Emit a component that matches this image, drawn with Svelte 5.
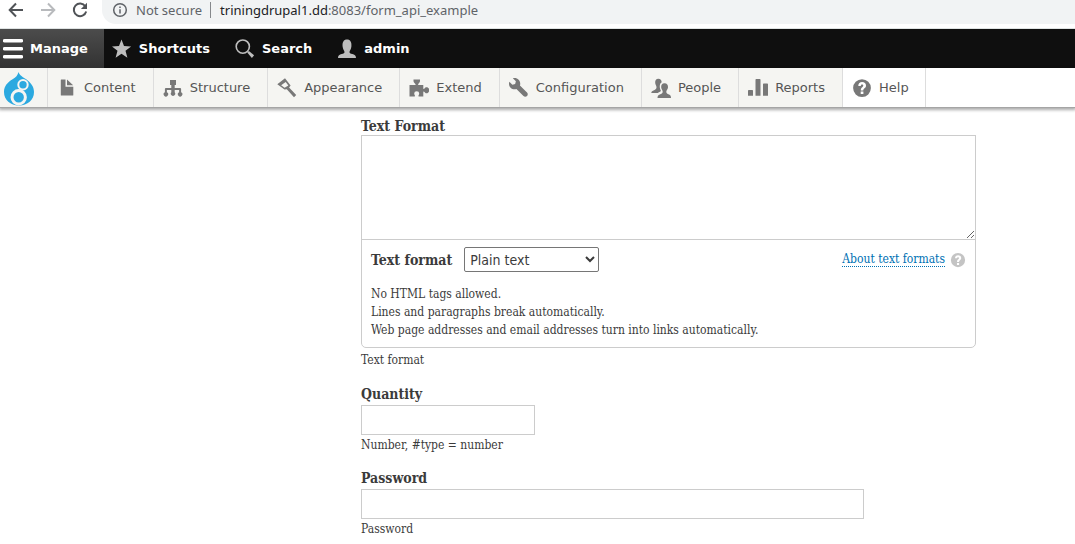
<script>
  const mainTabs = [
    { label: 'Manage', icon: 'menu', active: true },
    { label: 'Shortcuts', icon: 'star' },
    { label: 'Search', icon: 'search' },
    { label: 'admin', icon: 'person' },
  ];
  const trayTabs = [
    { label: 'Content', icon: 'file' },
    { label: 'Structure', icon: 'tree' },
    { label: 'Appearance', icon: 'brush' },
    { label: 'Extend', icon: 'puzzle' },
    { label: 'Configuration', icon: 'wrench' },
    { label: 'People', icon: 'people' },
    { label: 'Reports', icon: 'bars' },
    { label: 'Help', icon: 'help', plain: true },
  ];
  let format = $state('Plain text');
</script>

{#snippet icon(name)}
  <svg class="icon" viewBox="0 0 20 20" aria-hidden="true">
    {#if name === 'menu'}
      <path d="M1.5 0h17a1.5 1.5 0 0 1 0 3.4h-17a1.5 1.5 0 0 1 0-3.4zM1.5 8h17a1.5 1.5 0 0 1 0 3.4h-17a1.5 1.5 0 0 1 0-3.4zM1.5 16h17a1.5 1.5 0 0 1 0 3.4h-17a1.5 1.5 0 0 1 0-3.4z" />
    {:else if name === 'star'}
      <path d="M9.500 .4l2.500 6.700 7.100.3-5.600 4.400 1.900 6.900-5.900-4-5.900 4 1.900-6.900L0 7.400l7-.3z" />
    {:else if name === 'search'}
      <circle cx="7.800" cy="7.600" r="6.600" fill="none" stroke="currentColor" stroke-width="1.600" />
      <path d="M12.200 13.600l1.700-1.700 5.200 4.400-2.200 2.600z" />
    {:else if name === 'person'}
      <path d="M1 19c0-2.400 1.500-3.300 3.600-3.900 2.200-.6 2.900-1 2.900-2.100 0-1-1.600-2.700-1.900-5.500C5.200 3.200 6.600.5 10 .5s4.800 2.700 4.400 7c-.3 2.800-1.900 4.500-1.900 5.500 0 1.100.7 1.500 2.900 2.100 2.100.6 3.600 1.500 3.600 3.900z" />
    {:else if name === 'file'}
      <path d="M4 1.500h4.500v7.200h7.800v8.200q0 .6-.6.6H4.400q-.6 0-.6-.6V2q0-.5.4-.5zM10 1.500l6.200 5.800H10z" />
    {:else if name === 'tree'}
      <path d="M8.300 7H7V2h6v5h-1.300v3h5.400q1 0 1 1v3.300a2.200 2.200 0 1 1-2 0V12h-4.400v2.300a2.200 2.200 0 1 1-3.400 0V12H3.900v2.300a2.200 2.200 0 1 1-2 0V11q0-1 1-1h5.400z" />
    {:else if name === 'brush'}
      <path fill-rule="evenodd" d="M8 .3l5.600 7.300-1.500 1.800 7.100 7.500-2.200 2.300-7.200-8-2.300.4L.3 6.200zM8.700 4L4.100 7.300l3.500 2.500 3.700-2.200z" />
    {:else if name === 'puzzle'}
      <path d="M.5 7h5.700q.6 0 .4-.8C5.800 5 4.500 4.500 4.500 2.900V1.500h6.500v1.400c0 1.600-1.300 2.100-1.900 3.300-.1.500 0 .8.500.8h4.700v3.600q.3.600.9.100l1.500-1.500h1.600q2 1.100 2 3t-2 3h-1.600l-1.500-1.500q-.6-.5-.9.100v4.700H9.800q-.5 0-.4-.7.800-1.300.8-2.300 0-2.300-2.500-2.300t-2.500 2.300q0 1 .8 2.300 0 .7-.5.700h-5z" />
    {:else if name === 'wrench'}
      <path transform="scale(1.25)" d="M14.416 11.586l-5.666-5.665c.15-.449.252-.921.252-1.421 0-2.485-2.016-4.500-4.502-4.500-.505 0-.981.102-1.434.255l2.431 2.431-.588 2.196-2.196.588-2.445-2.445c-.162.464-.268.956-.268 1.475 0 2.486 2.014 4.500 4.500 4.500.500 0 .972-.102 1.421-.251l5.667 5.665c.781.781 2.047.781 2.828 0s.781-2.047 0-2.828z" />
    {:else if name === 'people'}
      <path d="M7.400.8c-2.500 0-3.400 1.700-3.200 4.300.2 1.900 1.300 2.700 1.300 4.200 0 1.900-1.400 2.500-3 3.100C1 13 .3 13.600.3 15h6.500q.8-1 2.700-1.600l.4-.9C8.600 10.500 8 5.500 10.700 4.200 10.500 2 9.500.8 7.400.8z" />
      <path d="M13.500 5.200c-2.500 0-3.500 1.700-3.300 4.300.2 1.900 1.500 2.800 1.500 4.300 0 1.500-1.300 2.100-2.900 2.700-1.600.6-2.300 1.500-2.300 3.400H20c0-1.900-.5-2.800-2-3.400-1.600-.6-2.700-1.200-2.700-2.700s1.500-2.400 1.700-4.300c.2-2.600-1-4.300-3.500-4.300z" />
    {:else if name === 'bars'}
      <path d="M.8 12h3.500q.7 0 .7.700v5.100H0v-5.100q0-.7.800-.7zM8.200 1h3.600q.7 0 .7.700v16.100h-5V1.700q0-.7.700-.7zM15.700 5.500h3.600q.7 0 .7.700v11.600h-5V6.200q0-.7.700-.7z" />
    {:else if name === 'help'}
      <path fill-rule="evenodd" d="M10 1.200a8.900 8.900 0 1 1 0 17.800 8.900 8.900 0 0 1 0-17.800zM6.300 7.900h2.500c0-.9.500-1.400 1.300-1.400.7 0 1.200.4 1.200 1.100 0 .8-.6 1.200-1.300 1.900-.9.800-1.200 1.500-1.200 2.900h2.500c0-1 .4-1.400 1.200-2.100.9-.8 1.500-1.600 1.500-2.900 0-2-1.600-3.400-3.900-3.400S6.300 5.500 6.300 7.900zM8.700 13.600v2.500h2.700v-2.500z" />
    {/if}
  </svg>
{/snippet}

<header class="browser">
  <button aria-label="Back">
    <svg viewBox="0 0 16 16"><path d="M15 8H2M8 1.500L1.700 8 8 14.500" /></svg>
  </button>
  <button class="dim" aria-label="Forward">
    <svg viewBox="0 0 16 16"><path d="M1 8h13M8 1.500L14.300 8 8 14.500" /></svg>
  </button>
  <button aria-label="Reload">
    <svg viewBox="0 0 16 16"><path d="M13.300 4.200A6.300 6.300 0 1 0 14.200 9.500" /><path class="solid" d="M15 .8v6.300H8.900z" /></svg>
  </button>
  <div class="address">
    <svg viewBox="0 0 16 16" aria-hidden="true"><circle cx="8" cy="8" r="6.300" /><path d="M8 7.200v4.200M8 4.400v1.600" /></svg>
    <span class="secure">Not secure</span>
    <span class="url"><b>triningdrupal1.dd</b>:8083/form_api_example</span>
  </div>
</header>

<nav class="bar" aria-label="Toolbar">
  {#each mainTabs as tab}
    <a href="#{tab.icon}" class:active={tab.active}>{@render icon(tab.icon)}{tab.label}</a>
  {/each}
</nav>

<nav class="tray" aria-label="Administration">
  <a class="home" href="#home" aria-label="Home">
    <svg viewBox="0 0 32 34">
      <path class="drop" d="M15.500 0c1 3.500 4.500 5 7.700 7.300C27.500 10.400 31 14.500 31 20c0 8-6.500 13.500-15 13.500S1 28 1 20c0-6 4-10 8.600-12.700C13 5.300 14.600 3.300 15.500 0z" />
      <circle class="ring" cx="20" cy="12.800" r="4.700" />
      <circle class="ring wide" cx="15.700" cy="25.200" r="6.700" />
    </svg>
  </a>
  {#each trayTabs as tab}
    <a href="#{tab.icon}" class:plain={tab.plain}>{@render icon(tab.icon)}{tab.label}</a>
  {/each}
</nav>

<main>
  <form>
    <div class="field">
      <label for="body-text">Text Format</label>
      <textarea id="body-text"></textarea>
      <div class="guide">
        <div class="guide-head">
          <label for="format">Text format</label>
          <select id="format" bind:value={format}>
            <option>Plain text</option>
            <option>Basic HTML</option>
            <option>Full HTML</option>
          </select>
          <a class="about" href="#formats"><span>About text formats</span>{@render icon('help')}</a>
        </div>
        <ul>
          <li>No HTML tags allowed.</li>
          <li>Lines and paragraphs break automatically.</li>
          <li>Web page addresses and email addresses turn into links automatically.</li>
        </ul>
      </div>
      <p>Text format</p>
    </div>
    <div class="field">
      <label for="quantity">Quantity</label>
      <input id="quantity" class="short" type="number" />
      <p>Number, #type = number</p>
    </div>
    <div class="field">
      <label for="password">Password</label>
      <input id="password" type="password" />
      <p>Password</p>
    </div>
  </form>
</main>

<style>
  :global(body) {
    margin: 0;
    background: #fff;
    overflow: hidden;
  }
  * {
    box-sizing: border-box;
  }
  a {
    text-decoration: none;
  }
  .icon {
    width: 20px;
    height: 20px;
    flex: none;
    fill: currentColor;
  }

  .browser {
    display: flex;
    align-items: flex-start;
    height: 29px;
    padding-left: 8px;
    border-bottom: 1px solid #dfe3e3;
    font: 13px/20px "Noto Sans", "Open Sans", sans-serif;
    color: #5f6368;
  }
  .browser button {
    width: 16px;
    height: 20px;
    margin-right: 16px;
    padding: 2px 0;
    border: 0;
    background: none;
    color: #505357;
  }
  .browser button.dim {
    color: #b8babd;
  }
  .browser svg {
    display: block;
    width: 16px;
    height: 16px;
    fill: none;
    stroke: currentColor;
    stroke-width: 2;
  }
  .browser .solid {
    fill: currentColor;
    stroke: none;
  }
  .address {
    display: flex;
    flex: 1;
    align-items: center;
    height: 24px;
    margin-left: -2px;
    padding: 0 10px 4px;
    border-radius: 0 0 0 14px;
    background: #f1f3f4;
  }
  .address svg {
    stroke-width: 1.500;
  }
  .secure {
    margin-left: 8px;
    padding-right: 8px;
    line-height: 16px;
    border-right: 1px solid #85888c;
  }
  .url {
    margin-left: 9px;
  }
  .url b {
    font-weight: 400;
    color: #202124;
  }

  .bar {
    display: flex;
    height: 39px;
    background: #0f0f0f;
    font: bold 13px/39px "DejaVu Sans", Verdana, sans-serif;
  }
  .bar a {
    display: flex;
    align-items: center;
    gap: 7px;
    padding: 0 17px 0 8px;
    color: #fff;
  }
  .bar .icon {
    color: #bebebe;
  }
  .bar .active {
    padding: 0 16px 0 3px;
    background: linear-gradient(#4c4c4c, #323232);
  }
  .bar .active .icon {
    color: #fff;
  }

  .tray {
    display: flex;
    height: 40px;
    border-bottom: 1px solid #a5a5a5;
    box-shadow: 0 1px 3px 1px rgba(0, 0, 0, 0.333);
    font: 13px/39px "DejaVu Sans", Verdana, sans-serif;
  }
  .tray a {
    display: flex;
    align-items: center;
    gap: 7px;
    padding: 0 17px 0 9px;
    border-right: 1px solid #ddd;
    background: #f5f5f2;
    color: #565656;
  }
  .tray a.plain {
    padding-right: 16px;
    background: #fff;
  }
  .tray .icon {
    color: #787878;
  }
  .tray .home {
    width: 48px;
    padding: 0 0 0 3px;
  }
  .home svg {
    width: 32px;
    height: 34px;
    margin-top: 2px;
  }
  .drop {
    fill: #2ba9e0;
  }
  .ring {
    fill: none;
    stroke: #f5f5f2;
    stroke-width: 2;
  }
  .wide {
    stroke-width: 3;
  }

  main {
    padding: 9px 99px 0 361px;
    font-family: "DejaVu Serif Condensed", "DejaVu Serif", Georgia, serif;
    color: #3b3b3b;
  }
  .field {
    margin-bottom: 13px;
  }
  label {
    display: block;
    font-size: 14px;
    line-height: 18px;
    font-weight: bold;
  }
  textarea {
    display: block;
    width: 100%;
    height: 105px;
    border: 1px solid #ccc;
    resize: vertical;
  }
  .guide {
    margin-top: -1px;
    padding: 7px 9px 8px;
    border: 1px solid #ccc;
    border-radius: 0 0 5px 5px;
  }
  .guide-head {
    display: flex;
    align-items: center;
    gap: 12px;
  }
  select {
    width: 135px;
    height: 25px;
    padding: 0 0 0 1px;
    border: 1px solid #767676;
    border-radius: 2px;
    background: #fff;
    font: 14px/20px "DejaVu Sans Condensed", "Noto Sans", sans-serif;
    color: #3b3b3b;
  }
  .about {
    display: flex;
    align-items: center;
    gap: 5px;
    margin-left: auto;
    font-size: 12px;
    line-height: 14px;
    color: #0071b3;
  }
  .about span {
    border-bottom: 1px dotted #0071b3;
  }
  .about .icon {
    width: 16px;
    height: 16px;
    color: #c4c4c4;
  }
  ul {
    margin: 13px 0 0;
    padding: 0;
    list-style: none;
    font-size: 12px;
    line-height: 18px;
  }
  p {
    margin: 0;
    font-size: 12px;
    line-height: 21px;
  }
  .guide + p {
    line-height: 24px;
  }
  input {
    display: block;
    width: 503px;
    max-width: 100%;
    height: 30px;
    margin-top: 2px;
    border: 1px solid #ccc;
  }
  .short {
    width: 174px;
  }
</style>
